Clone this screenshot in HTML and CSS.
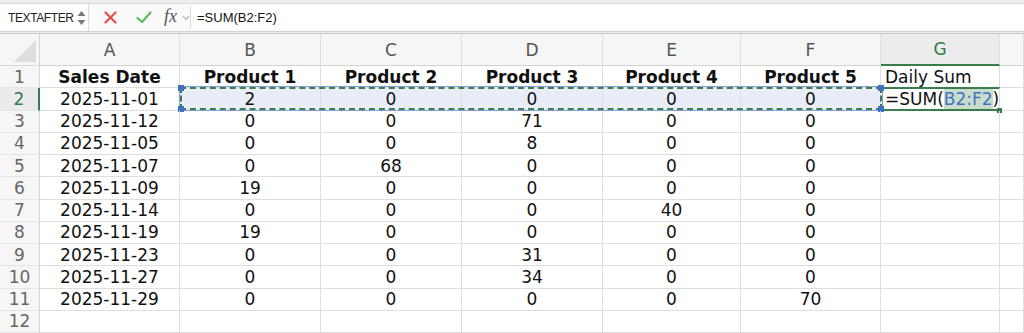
FILE: index.html
```html
<!DOCTYPE html>
<html lang="en">
<head>
    <meta charset="UTF-8">
    <title>Sales sheet</title>
    <link rel="stylesheet" href="styles.css">
</head>
<body>
    <div class="toolbar">
        <div class="bar">
            <div class="namebox">
                <span class="name">TEXTAFTER</span>
                <svg class="spin" width="9" height="16" viewBox="0 0 9 16">
                    <path d="M4.5 1 L8.5 6 L0.5 6 Z" fill="#7a7a7a"/>
                    <path d="M4.5 15 L8.5 10 L0.5 10 Z" fill="#7a7a7a"/>
                </svg>
            </div>
            <div class="actions">
                <svg class="cancel" width="13" height="13" viewBox="0 0 13 13">
                    <path d="M1.5 1.5 L11.5 11.5 M11.5 1.5 L1.5 11.5" stroke="#e05050" stroke-width="2.2" stroke-linecap="round"/>
                </svg>
                <svg class="ok" width="16" height="13" viewBox="0 0 16 13">
                    <path d="M1.5 7 L6 11 L14.5 1.5" stroke="#5cb85c" stroke-width="2.2" fill="none" stroke-linecap="round" stroke-linejoin="round"/>
                </svg>
                <span class="fx">fx</span>
                <svg class="chev" width="8" height="6" viewBox="0 0 8 6">
                    <path d="M1 1 L4 4.5 L7 1" stroke="#b8b8b8" stroke-width="1.2" fill="none"/>
                </svg>
            </div>
            <div class="formula">=SUM(B2:F2)</div>
        </div>
    </div>

    <div class="sheet">
        <div class="row head">
            <div class="corner"><span class="tri"></span></div>
            <div class="col">A</div>
            <div class="col">B</div>
            <div class="col">C</div>
            <div class="col">D</div>
            <div class="col">E</div>
            <div class="col">F</div>
            <div class="col active">G</div>
            <div class="col"></div>
        </div>

        <div class="row">
            <div class="num">1</div>
            <div class="cell bold">Sales Date</div>
            <div class="cell bold">Product 1</div>
            <div class="cell bold">Product 2</div>
            <div class="cell bold">Product 3</div>
            <div class="cell bold">Product 4</div>
            <div class="cell bold">Product 5</div>
            <div class="cell left">Daily Sum</div>
            <div class="cell"></div>
        </div>

        <div class="row current">
            <div class="num active">2</div>
            <div class="cell">2025-11-01</div>
            <div class="cell sel">2</div>
            <div class="cell sel">0</div>
            <div class="cell sel">0</div>
            <div class="cell sel">0</div>
            <div class="cell sel">0</div>
            <div class="cell left editing">=SUM(<span class="ref">B2:F2</span>)<span class="fill"></span></div>
            <div class="cell"></div>
            <div class="range">
                <span class="knob tl"></span>
                <span class="knob bl"></span>
                <span class="knob tr"></span>
                <span class="knob br"></span>
            </div>
        </div>

        <div class="row">
            <div class="num">3</div>
            <div class="cell">2025-11-12</div>
            <div class="cell">0</div><div class="cell">0</div><div class="cell">71</div><div class="cell">0</div><div class="cell">0</div>
            <div class="cell"></div><div class="cell"></div>
        </div>
        <div class="row">
            <div class="num">4</div>
            <div class="cell">2025-11-05</div>
            <div class="cell">0</div><div class="cell">0</div><div class="cell">8</div><div class="cell">0</div><div class="cell">0</div>
            <div class="cell"></div><div class="cell"></div>
        </div>
        <div class="row">
            <div class="num">5</div>
            <div class="cell">2025-11-07</div>
            <div class="cell">0</div><div class="cell">68</div><div class="cell">0</div><div class="cell">0</div><div class="cell">0</div>
            <div class="cell"></div><div class="cell"></div>
        </div>
        <div class="row">
            <div class="num">6</div>
            <div class="cell">2025-11-09</div>
            <div class="cell">19</div><div class="cell">0</div><div class="cell">0</div><div class="cell">0</div><div class="cell">0</div>
            <div class="cell"></div><div class="cell"></div>
        </div>
        <div class="row">
            <div class="num">7</div>
            <div class="cell">2025-11-14</div>
            <div class="cell">0</div><div class="cell">0</div><div class="cell">0</div><div class="cell">40</div><div class="cell">0</div>
            <div class="cell"></div><div class="cell"></div>
        </div>
        <div class="row">
            <div class="num">8</div>
            <div class="cell">2025-11-19</div>
            <div class="cell">19</div><div class="cell">0</div><div class="cell">0</div><div class="cell">0</div><div class="cell">0</div>
            <div class="cell"></div><div class="cell"></div>
        </div>
        <div class="row">
            <div class="num">9</div>
            <div class="cell">2025-11-23</div>
            <div class="cell">0</div><div class="cell">0</div><div class="cell">31</div><div class="cell">0</div><div class="cell">0</div>
            <div class="cell"></div><div class="cell"></div>
        </div>
        <div class="row">
            <div class="num">10</div>
            <div class="cell">2025-11-27</div>
            <div class="cell">0</div><div class="cell">0</div><div class="cell">34</div><div class="cell">0</div><div class="cell">0</div>
            <div class="cell"></div><div class="cell"></div>
        </div>
        <div class="row">
            <div class="num">11</div>
            <div class="cell">2025-11-29</div>
            <div class="cell">0</div><div class="cell">0</div><div class="cell">0</div><div class="cell">0</div><div class="cell">70</div>
            <div class="cell"></div><div class="cell"></div>
        </div>
        <div class="row">
            <div class="num">12</div>
            <div class="cell"></div>
            <div class="cell"></div><div class="cell"></div><div class="cell"></div><div class="cell"></div><div class="cell"></div>
            <div class="cell"></div><div class="cell"></div>
        </div>
    </div>
</body>
</html>
```

FILE: styles.css
```css
* {
    box-sizing: border-box;
}
body {
    margin: 0;
    background: #fff;
    font-family: "DejaVu Sans", Verdana, sans-serif;
    overflow: hidden;
}

/* formula bar */
.toolbar {
    height: 34px;
    padding-top: 3px;
    background: #ececec;
    border-bottom: 1px solid #c9c9c9;
}
.bar {
    height: 29px;
    display: flex;
    align-items: center;
    background: #fafafa;
    border-top: 1px solid #d9d9d9;
    border-bottom: 1px solid #d3d3d3;
}
.namebox {
    width: 89px;
    height: 100%;
    display: flex;
    align-items: center;
    justify-content: space-between;
    padding: 0 2px 0 8px;
    background: #fff;
    border-right: 1px solid #dcdcdc;
}
.name {
    font-family: "Liberation Sans", Arial, sans-serif;
    font-size: 12px;
    letter-spacing: -0.4px;
    color: #222;
}
.actions {
    width: 101px;
    display: flex;
    align-items: center;
    padding-left: 15px;
}
.cancel {
    margin-right: 19px;
}
.ok {
    margin-right: 12px;
}
.fx {
    font-family: "Liberation Serif", "Times New Roman", serif;
    font-style: italic;
    font-size: 18px;
    color: #555;
    margin-right: 5px;
    margin-top: -2px;
}
.formula {
    flex: 1;
    height: 23px;
    display: flex;
    align-items: center;
    padding-left: 6px;
    background: #fff;
    border-left: 1px solid #dcdcdc;
    font-family: "Liberation Sans", Arial, sans-serif;
    font-size: 13px;
    color: #111;
}

/* grid */
.row {
    position: relative;
    display: grid;
    grid-template-columns: 40px 140px 141px 141px 141px 138px 140px 119px 1fr;
    height: 22.25px;
    font-size: 17px;
    color: #111;
}
.row.head {
    height: 32px;
    background: #f6f6f6;
}
.corner {
    position: relative;
    border-right: 1px solid #d6d6d6;
    border-bottom: 1px solid #d6d6d6;
}
.tri {
    position: absolute;
    right: 3px;
    bottom: 3px;
    border-left: 22px solid transparent;
    border-bottom: 22px solid #dedede;
}
.col {
    display: flex;
    align-items: center;
    justify-content: center;
    color: #555;
    border-right: 1px solid #e0e0e0;
    border-bottom: 1px solid #d2d2d2;
}
.col.active {
    background: #ececec;
    color: #2f7a45;
    border-bottom: 2px solid #3a7d4c;
}
.num {
    display: flex;
    align-items: center;
    justify-content: center;
    color: #666;
    background: #f6f6f6;
    border-right: 1px solid #d2d2d2;
    border-bottom: 1px solid #e4e4e4;
}
.num.active {
    background: #ebebeb;
    color: #2f7a45;
    border-right: 2px solid #3a7d4c;
}
.cell {
    display: flex;
    align-items: center;
    justify-content: center;
    white-space: nowrap;
    border-right: 1px solid #dedede;
    border-bottom: 1px solid #dedede;
}
.cell.bold {
    font-weight: bold;
}
.cell.left {
    justify-content: flex-start;
    padding-left: 4px;
}
.cell.sel {
    background: #e9edf8;
}
.cell.editing {
    position: relative;
    overflow: visible;
    border-top: 2px solid #3a7d4c;
    border-bottom: 2px solid #3a7d4c;
    margin-top: -1px;
}
.ref {
    color: #4472c4;
    background: #c8ddca;
}
.fill {
    position: absolute;
    right: -3px;
    bottom: -4px;
    width: 5px;
    height: 5px;
    background: #3a7d4c;
}

/* copy range marquee */
.range {
    position: absolute;
    left: 180px;
    top: -1px;
    width: 702px;
    height: 23px;
    border: 2px dashed #3f7d4a;
    outline: 1px solid #7d9fdb;
    pointer-events: none;
}
.knob {
    position: absolute;
    width: 6px;
    height: 6px;
    background: #3e70c9;
}
.knob.tl { left: -4px; top: -4px; }
.knob.bl { left: -4px; bottom: -4px; }
.knob.tr { right: -4px; top: -4px; }
.knob.br { right: -4px; bottom: -4px; }
```
